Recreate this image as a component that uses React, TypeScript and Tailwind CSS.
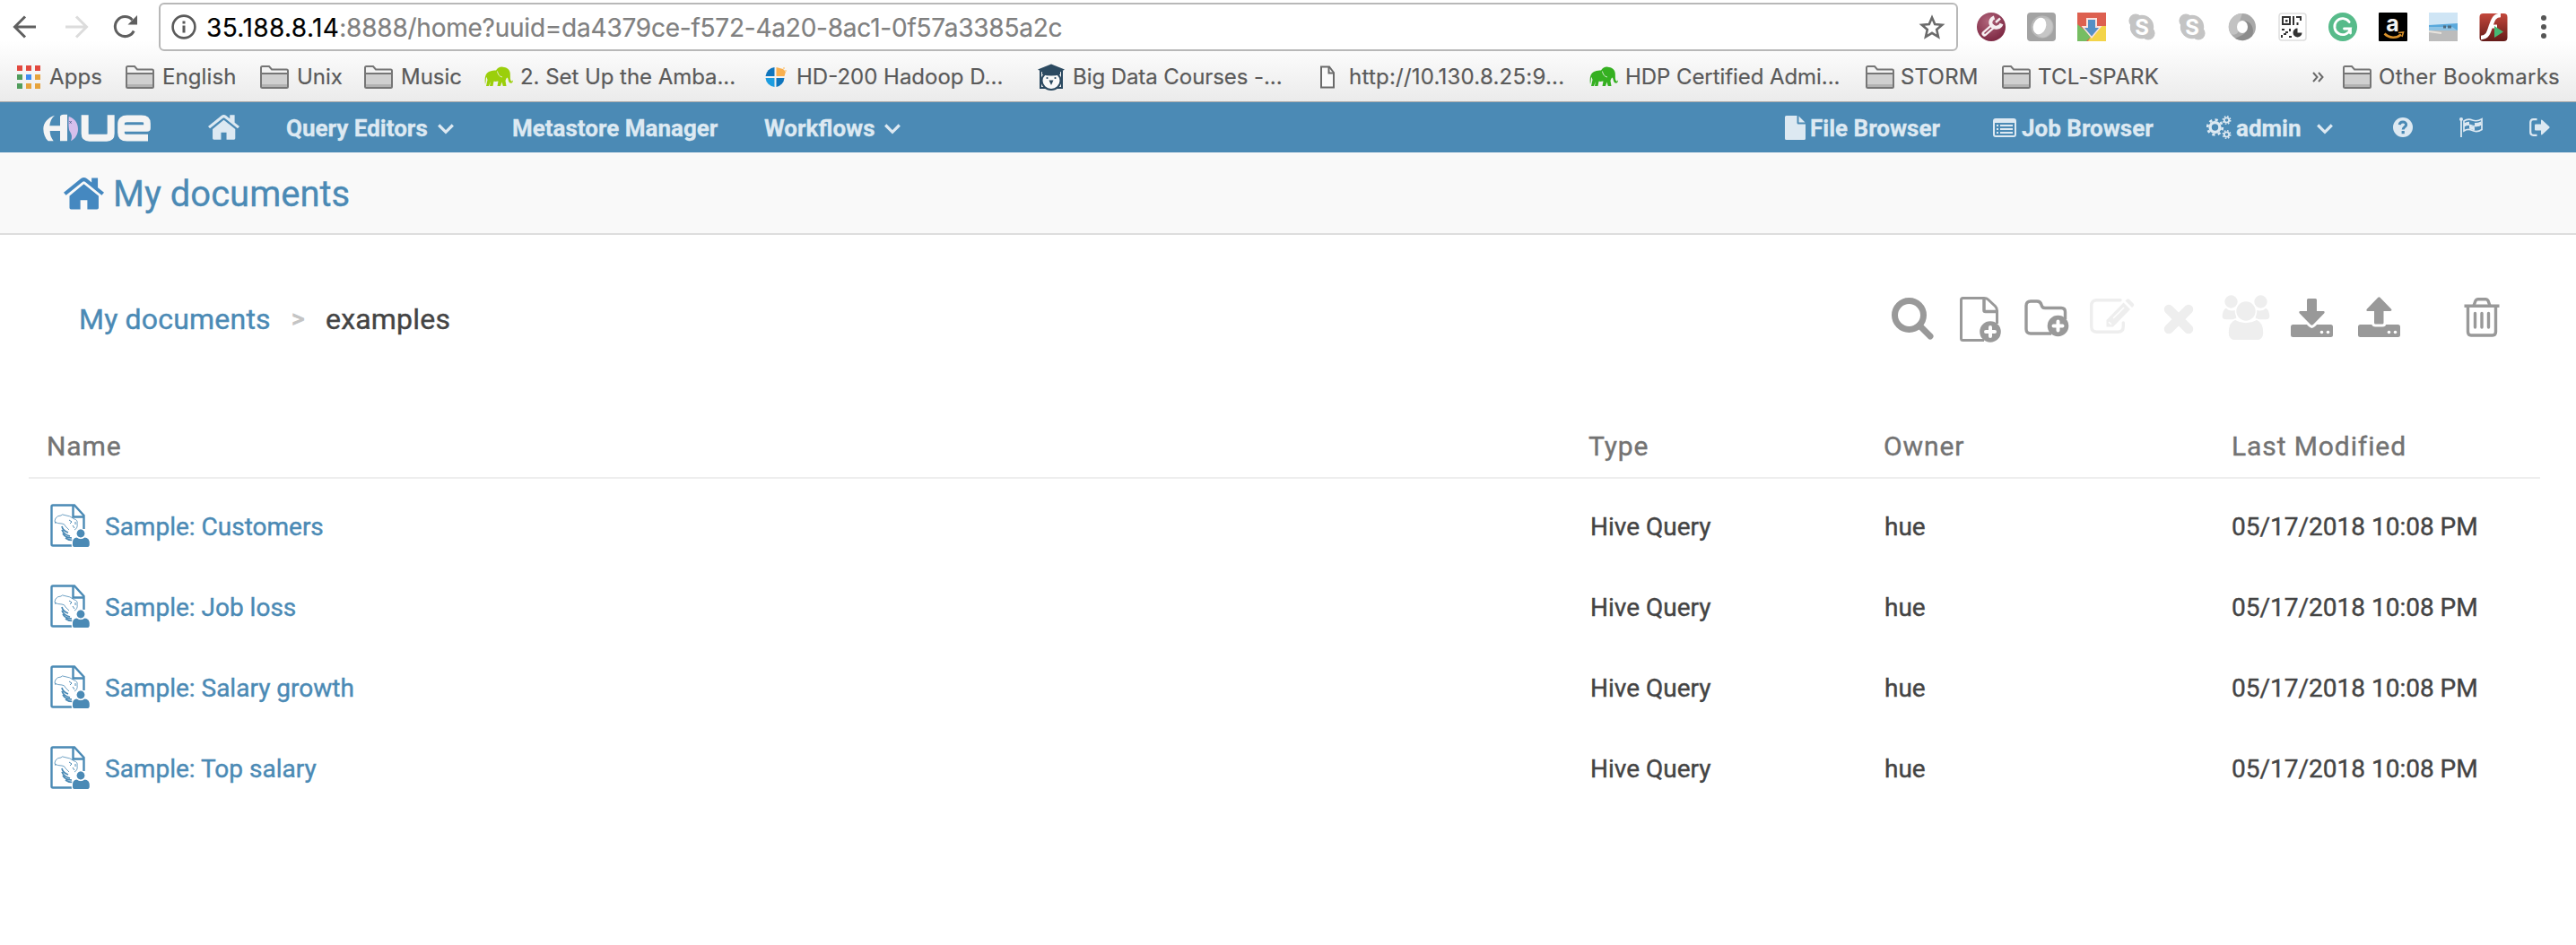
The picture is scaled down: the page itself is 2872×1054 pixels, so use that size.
import type { ReactNode } from "react";

/* ---------- Browser toolbar ---------- */

function BackArrow() {
  return (
    <svg className="h-[26px] w-[28px]" viewBox="0 0 28 26" fill="none" stroke="currentColor" strokeWidth="3">
      <path d="M26 13H3M14 1.5L2.5 13L14 24.5" />
    </svg>
  );
}

function Reload() {
  return (
    <svg className="h-[28px] w-[28px]" viewBox="0 0 28 28" fill="none">
      <path d="M23.2 18.5A11 11 0 1 1 21.5 6.2" stroke="#5f5f5f" strokeWidth="3" />
      <path d="M27 1V11.5H16.5Z" fill="#5f5f5f" />
    </svg>
  );
}

function Info() {
  return (
    <svg className="h-[28px] w-[28px]" viewBox="0 0 28 28">
      <circle cx="14" cy="14" r="12.4" fill="none" stroke="#5a5a5a" strokeWidth="2.6" />
      <rect x="12.5" y="12.5" width="3" height="8" fill="#5a5a5a" />
      <rect x="12.5" y="7.5" width="3" height="3" fill="#5a5a5a" />
    </svg>
  );
}

function Star() {
  return (
    <svg className="h-[29px] w-[30px]" viewBox="0 0 30 29">
      <path d="M15 3.5L18.2 11L26.3 11.7L20.2 17L22 25L15 20.8L8 25L9.8 17L3.7 11.7L11.8 11Z" fill="none" stroke="#6a6a6a" strokeWidth="2.6" />
    </svg>
  );
}

function Ext({ children }: { children: ReactNode }) {
  return (
    <svg className="h-8 w-8 shrink-0 overflow-visible" viewBox="0 0 32 32">
      {children}
    </svg>
  );
}

function Skype() {
  return (
    <Ext>
      <circle cx="9" cy="9" r="7.6" fill="#c4c4c4" />
      <circle cx="23" cy="23" r="7.6" fill="#c4c4c4" />
      <circle cx="16" cy="16" r="13.2" fill="#c4c4c4" />
      <text x="16" y="24.5" textAnchor="middle" fontFamily="Inter" fontWeight="700" fontSize="24" fill="#fff">S</text>
    </Ext>
  );
}

function Extensions() {
  return (
    <div className="flex items-center gap-6">
      <Ext>
        <defs>
          <radialGradient id="ruby" cx="0.4" cy="0.3" r="0.75">
            <stop offset="0" stopColor="#b0647a" />
            <stop offset="1" stopColor="#7a2540" />
          </radialGradient>
        </defs>
        <circle cx="16" cy="16" r="16" fill="url(#ruby)" />
        <path d="M8.500 23.500L17 16" stroke="#f6eef1" strokeWidth="6" strokeLinecap="round" />
        <path d="M8.500 23.500L17 16" stroke="#8d3450" strokeWidth="1.500" />
        <path d="M19.500 5.500C15 7 14 12 17 15C20 18 26 17 27.500 12.500" fill="none" stroke="#f6eef1" strokeWidth="4" />
        <path d="M21 11L26 6.500" stroke="#f6eef1" strokeWidth="2.500" />
      </Ext>
      <Ext>
        <rect width="32" height="32" rx="4" fill="#a3a3a3" />
        <circle cx="17" cy="16" r="12.500" fill="#b9b9b9" />
        <ellipse cx="19" cy="17" rx="9" ry="11" fill="#c6c6c6" transform="rotate(25 19 17)" />
        <ellipse cx="14" cy="15" rx="7" ry="9.500" fill="#fff" transform="rotate(20 14 15)" />
      </Ext>
      <Ext>
        <rect width="32" height="32" fill="#dd6050" />
        <path d="M0 13V32H10L16 26Z" fill="#76bd62" />
        <path d="M32 15V32H12L22 15Z" fill="#f3d44a" />
        <path d="M10 6H22V15H27.500L16 29L4.500 15H10Z" fill="#fbe3df" />
        <path d="M12 8H20V17H24L16 26.500L8 17H12Z" fill="#5590c5" />
      </Ext>
      <Skype />
      <Skype />
      <Ext>
        <circle cx="16" cy="16" r="15" fill="#a9a9a9" />
        <path d="M16 1A15 15 0 0 0 3 24C8 26 14 24 12 12Z" fill="#c2c2c2" />
        <path d="M27 26A15 15 0 0 1 8 29L16 25C22 22 22 14 17 9C26 9 30 18 27 26Z" fill="#8c8c8c" />
        <ellipse cx="16" cy="16" rx="6" ry="7" fill="#fff" />
      </Ext>
      <Ext>
        <rect x="1" y="1" width="30" height="30" rx="3" fill="#fff" stroke="#dedede" strokeWidth="1.500" />
        <rect x="5" y="5" width="8" height="8" fill="none" stroke="#333" strokeWidth="2" />
        <rect x="8" y="8" width="2.500" height="2.500" fill="#333" />
        <path d="M17 4V14M20 5H26M25 4V9M21.500 11V14M4 19H7M8 22H11M4 25V28M12 27H15M13 18V21M6 24H9" stroke="#333" strokeWidth="2" />
        <path d="M21.500 17.500A5 5 0 1 0 26.500 22.500H21.500Z" fill="#333" />
      </Ext>
      <Ext>
        <circle cx="16" cy="16" r="16" fill="#57bb8a" />
        <path d="M23.200 10.500A9 9 0 1 0 24.500 18H17.500M24.500 18V23" fill="none" stroke="#fff" strokeWidth="2.800" strokeLinecap="round" />
      </Ext>
      <Ext>
        <rect width="32" height="32" rx="1" fill="#000" />
        <text x="15.500" y="20.500" textAnchor="middle" fontFamily="Inter" fontWeight="700" fontSize="25" fill="#f2f2f2">a</text>
        <path d="M6.500 23.500C12 29 20 29 25 24.500" fill="none" stroke="#d8902a" strokeWidth="2.600" />
        <path d="M22 22.500L27.500 22L26 27" fill="none" stroke="#d8902a" strokeWidth="1.600" />
      </Ext>
      <Ext>
        <rect width="32" height="32" fill="#cfe5f5" />
        <path d="M0 14L32 12V22H0Z" fill="#5aa9dc" />
        <path d="M0 16H26L32 20H0Z" fill="#8fc3e4" />
        <path d="M16 16H19M21 16H25" stroke="#4c6b80" strokeWidth="3" />
        <path d="M0 20L32 20V32H0Z" fill="#bcbcbc" />
        <path d="M0 21L14 23" stroke="#e8e4de" strokeWidth="2" />
      </Ext>
      <Ext>
        <defs>
          <linearGradient id="flash" x1="0" y1="0" x2="0" y2="1">
            <stop offset="0" stopColor="#c4483c" />
            <stop offset="1" stopColor="#641a18" />
          </linearGradient>
        </defs>
        <rect x="0.500" y="1" width="31" height="31" rx="4" fill="url(#flash)" />
        <path d="M24 3C17 3 15.500 8 13 15C10.500 23 9 28 2 28" fill="none" stroke="#fff" strokeWidth="4.500" />
        <path d="M12 15.500H20" stroke="#fff" strokeWidth="4" />
        <path d="M17 15L27 21.500L17 28Z" fill="#45b874" />
      </Ext>
    </div>
  );
}

function Folder() {
  return (
    <svg className="h-[26px] w-8" viewBox="0 0 32 26">
      <path d="M1 24V2.500Q1 1 2.500 1H10L13 4.500H29.500Q31 4.500 31 6V23.500Q31 25 29.500 25H2.500Q1 25 1 24Z" fill="#f3f3f3" stroke="#767676" strokeWidth="2" />
      <path d="M2 10H30V24H2Z" fill="#d0d0d0" />
      <path d="M2 22.500H30" stroke="#b2b2b2" strokeWidth="3" />
      <path d="M1 9H31" stroke="#767676" strokeWidth="2" />
    </svg>
  );
}

function AppsGrid() {
  const colors = ["#e2493f", "#e2493f", "#e2493f", "#519d5c", "#3f8cf0", "#e6a33c", "#519d5c", "#e6a33c", "#e6a33c"];
  return (
    <div className="grid w-[26px] grid-cols-3 gap-[4px]">
      {colors.map((c, i) => (
        <svg key={i} className="h-[6px] w-[6px]" viewBox="0 0 6 6">
          <rect width="6" height="6" fill={c} />
        </svg>
      ))}
    </div>
  );
}

function Elephant({ color }: { color: string }) {
  return (
    <svg className="h-[23px] w-8" viewBox="0 0 32 23">
      <path
        d="M1 20C0 13 1 8 5 6C8 4.500 11 4.500 13 4.500C15 1 19 -0.500 22 1C26 1.500 28.500 4 28.800 8C29 12 28.500 15 30 16.500C30.800 17.300 31 16 31.800 15.600C32 18 30.500 19 29 18.500C26.500 18 27 13.500 25.500 12.500C24.500 13 24 14.500 23.500 16L24.500 22H20.800L19.500 17.500L18 22H14.500L15.500 16.500C13.500 17 12 17 10.500 16.800L9.500 22H6L6.800 17L5 22H2L3.500 15C3 13 2.500 12 2.200 12C1.600 14 2 17 1 20Z"
        fill={color}
      />
      <path d="M14.500 5.500C15 9 17 11.500 20 12" fill="none" stroke="#f4f4f4" strokeWidth="0.800" />
    </svg>
  );
}

function Quarters() {
  return (
    <svg className="h-[24px] w-[24px]" viewBox="0 0 24 24">
      <path d="M10.500 1V11H0.500A11 11 0 0 1 10.500 1Z" fill="#0f75bd" />
      <path d="M12.500 1V11H21.500L23 6L20 3Z" fill="#f9b04f" />
      <path d="M20 1H22V3H20ZM22 4H24V6H22Z" fill="#fbd7a4" />
      <path d="M0.500 13H10.500V23A11 11 0 0 1 0.500 13Z" fill="#1c9de0" />
      <path d="M12.500 13H21.500A11 11 0 0 1 12.500 23Z" fill="#0f75bd" />
    </svg>
  );
}

function Owl() {
  return (
    <svg className="h-[30px] w-[30px]" viewBox="0 0 30 30">
      <path d="M3 8V27H9M27 8V27H21" fill="none" stroke="#2c4a61" strokeWidth="2" />
      <ellipse cx="15" cy="19" rx="10.500" ry="10" fill="#fafafa" stroke="#2c4a61" strokeWidth="2" />
      <path d="M15 0.500L30 6.500L25 9.500V12Q15 15 5 12V9.500L0 6.500Z" fill="#2c4a61" />
      <path d="M12.500 18.500H17.500L15 24Z" fill="#2c4a61" />
      <circle cx="10.500" cy="16" r="1.100" fill="#2c4a61" />
      <circle cx="19.500" cy="16" r="1.100" fill="#2c4a61" />
    </svg>
  );
}

function PageIcon() {
  return (
    <svg className="h-[26px] w-4" viewBox="0 0 16 26" fill="none" stroke="#6a6a6a" strokeWidth="2">
      <path d="M1 1.500H10L15 8V24.500H1Z" fill="#fafafa" />
      <path d="M9.500 2V8.500H15" />
    </svg>
  );
}

const bookmarks: { icon: ReactNode; label: string; cell: string; lead: string; track: string }[] = [
  { icon: <AppsGrid />, label: "Apps", cell: "w-[121px]", lead: "w-[36px]", track: "tracking-[0.1px]" },
  { icon: <Folder />, label: "English", cell: "w-[150px]", lead: "w-[41px]", track: "tracking-[0.1px]" },
  { icon: <Folder />, label: "Unix", cell: "w-[116px]", lead: "w-[41px]", track: "tracking-[0px]" },
  { icon: <Folder />, label: "Music", cell: "w-[134px]", lead: "w-[41px]", track: "tracking-[0px]" },
  { icon: <Elephant color="#9bcf0b" />, label: "2. Set Up the Amba...", cell: "w-[313px]", lead: "w-[40px]", track: "tracking-[-0.05px]" },
  { icon: <Quarters />, label: "HD-200 Hadoop D...", cell: "w-[304px]", lead: "w-[35px]", track: "tracking-[0px]" },
  { icon: <Owl />, label: "Big Data Courses -...", cell: "w-[315px]", lead: "w-[39px]", track: "tracking-[-0.07px]" },
  { icon: <PageIcon />, label: "http://10.130.8.25:9...", cell: "w-[300px]", lead: "w-[32px]", track: "tracking-[0.22px]" },
  { icon: <Elephant color="#35b021" />, label: "HDP Certified Admi...", cell: "w-[308px]", lead: "w-[40px]", track: "tracking-[-0.07px]" },
  { icon: <Folder />, label: "STORM", cell: "w-[152px]", lead: "w-[39px]", track: "tracking-[0.2px]" },
  { icon: <Folder />, label: "TCL-SPARK", cell: "w-[180px]", lead: "w-[40px]", track: "tracking-[0.25px]" },
];

function Browser() {
  return (
    <header className="h-[114px] border-b border-[#a8a8a8] bg-linear-to-b from-white from-40% to-[#ebebeb] font-[Inter,sans-serif]">
      <div className="flex h-[60px] items-start pt-[3px]">
        <div className="flex h-[54px] w-[177px] shrink-0 items-center pl-[14px]">
          <span className="w-[57px] text-[#606060]"><BackArrow /></span>
          <span className="w-[55px] -scale-x-100 text-[#dcdcdc]"><span className="flex justify-end"><BackArrow /></span></span>
          <Reload />
        </div>
        <div className="flex h-[54px] w-[2006px] shrink-0 items-center rounded-[6px] border-2 border-[#b8b8b8] bg-white pr-[12px] pl-[12px]">
          <Info />
          <p className="ml-[11px] flex-1 pt-[1px] text-[28px] leading-[40px] whitespace-nowrap text-[#808080] [-webkit-text-stroke:0.2px]">
            <span className="tracking-[0.4px] text-black">35.188.8.14</span>
            <span className="tracking-[-0.23px]">:8888/home?uuid=da4379ce-f572-4a20-8ac1-0f57a3385a2c</span>
          </p>
          <Star />
        </div>
        <div className="flex h-[54px] items-center pl-[21px]">
          <Extensions />
          <svg className="ml-[36px] h-[28px] w-2" viewBox="0 0 8 28" fill="#565656">
            <circle cx="4" cy="4" r="3" />
            <circle cx="4" cy="14" r="3" />
            <circle cx="4" cy="24" r="3" />
          </svg>
        </div>
      </div>
      <nav className="flex h-[51px] items-center pl-[19px] text-[24px] leading-[30px] whitespace-nowrap text-[#5a5a5a] [-webkit-text-stroke:0.2px]">
        {bookmarks.map((b) => (
          <div key={b.label} className={`flex shrink-0 items-center ${b.cell}`}>
            <span className={`shrink-0 ${b.lead}`}>{b.icon}</span>
            <span className={b.track}>{b.label}</span>
          </div>
        ))}
        <svg className="ml-[166px] h-[12px] w-[13px] shrink-0" viewBox="0 0 13 12" fill="none" stroke="#6a6a6a" strokeWidth="2">
          <path d="M1 1L5.500 6L1 11M7 1L11.500 6L7 11" />
        </svg>
        <div className="ml-[21px] flex shrink-0 items-center">
          <span className="w-[40px]"><Folder /></span>
          <span className="tracking-[0.3px]">Other Bookmarks</span>
        </div>
      </nav>
    </header>
  );
}

/* ---------- Application bar ---------- */

function HueLogo() {
  return (
    <svg className="h-[31px] w-[121px]" viewBox="23 26 363 93" fill="none">
      <path d="M62 31C40 38 24 55 24 76C24 92 30 107 40 117H58C50 106 46 96 46 83H80V117H104V28H92Q80 28 80 36V66H45C46 52 52 39 62 31Z" fill="#f4f4f4" />
      <path d="M109 35C128 40 140 57 140 77C140 95 130 110 116 117C121 105 120 95 112 84C108 76 108 55 109 35Z" fill="#d7bfec" />
      <path d="M111 50L118 58M118 50L112 58" stroke="#4b5f8c" strokeWidth="2.500" />
      <path d="M163 30V92Q163 106 178 106H236Q250 106 250 92V30" stroke="#f4f4f4" strokeWidth="24" />
      <path d="M374 106H304Q284 106 284 88V60Q284 42 304 42H352Q371 42 371 58V74H288" stroke="#f4f4f4" strokeWidth="23" strokeLinejoin="round" />
    </svg>
  );
}

function House({ className }: { className: string }) {
  return (
    <svg className={className} viewBox="577 31 104 84" fill="currentColor" preserveAspectRatio="none">
      <path d="M577 70L621 34Q629 28 637 34L649 44V32H665V57L681 70L675 77L632 42Q629 40 626 42L583 77Z" />
      <path d="M629 48L667 79V110Q667 114 663 114H638V90H620V114H596Q592 114 592 110V79Z" />
    </svg>
  );
}

function Chevron() {
  return (
    <svg className="h-[12px] w-[18px]" viewBox="0 0 18 12" fill="none" stroke="currentColor" strokeWidth="3.200">
      <path d="M1.200 1.500L9 9.300L16.800 1.500" />
    </svg>
  );
}

function Gears() {
  const gear = (cx: number, cy: number, r: number, s: number, d: string) => (
    <g>
      <circle cx={cx} cy={cy} r={r} strokeWidth={s} />
      <circle cx={cx} cy={cy} r={r + s * 0.85} strokeWidth={s * 0.8} strokeDasharray={d} />
    </g>
  );
  return (
    <svg className="h-[26px] w-[28px]" viewBox="0 0 28 26" fill="none" stroke="currentColor">
      {gear(9.5, 13, 5.4, 3.4, "3.200 3.270")}
      {gear(22.5, 5, 2.7, 1.8, "1.700 1.630")}
      {gear(22.5, 21, 2.7, 1.8, "1.700 1.630")}
    </svg>
  );
}

function AppBar() {
  return (
    <nav className="flex h-[56px] items-center bg-[#4b8ab5] pl-[48px] font-[Roboto,sans-serif] text-[26px] leading-[30px] font-bold whitespace-nowrap text-[#dde9f2] [-webkit-text-stroke:0.3px]">
      <div className="w-[184px]"><HueLogo /></div>
      <div className="w-[87px]"><House className="h-[28px] w-[35px]" /></div>
      <div className="flex w-[252px] items-center gap-[11px] pt-[1px]">Query Editors <span className="pt-[2px]"><Chevron /></span></div>
      <div className="w-[281px] pt-[1px]">Metastore Manager</div>
      <div className="flex w-[200px] items-center gap-[10px] pt-[1px]">Workflows <span className="pt-[2px]"><Chevron /></span></div>
      <div className="ml-auto flex w-[232px] items-center">
        <svg className="h-[27px] w-[23px]" viewBox="0 0 23 27" fill="currentColor">
          <path d="M0 1.500Q0 0 1.500 0H13.500V8Q13.500 9.500 15 9.500H23V25.500Q23 27 21.500 27H1.500Q0 27 0 25.500ZM15.500 0.500L22.500 7.500H15.500Z" />
        </svg>
        <span className="ml-[5px] pt-[1px]">File Browser</span>
      </div>
      <div className="flex w-[238px] items-center">
        <svg className="h-[21px] w-[26px]" viewBox="0 0 26 21" fill="none" stroke="currentColor">
          <rect x="1" y="1" width="24" height="19" rx="2" strokeWidth="2" />
          <path d="M1 3H25" strokeWidth="4" />
          <path d="M4 8H6M8 8H22M4 12H6M8 12H22M4 16H6M8 16H22" strokeWidth="2" />
        </svg>
        <span className="ml-[6px] pt-[1px]">Job Browser</span>
      </div>
      <div className="flex w-[208px] items-center">
        <Gears />
        <span className="ml-[5px] pt-[1px]">admin</span>
        <span className="ml-[17px] pt-[3px]"><Chevron /></span>
      </div>
      <div className="w-[74px]">
        <svg className="h-[22px] w-[22px]" viewBox="0 0 22 22">
          <circle cx="11" cy="11" r="11" fill="currentColor" />
          <path d="M7.300 8.200C7.600 3.800 14.800 4 14.600 8.300C14.400 10.700 11.200 10.800 11.200 13.600" fill="none" stroke="#4b8ab5" strokeWidth="3" />
          <rect x="9.600" y="15" width="3.200" height="3.200" fill="#4b8ab5" />
        </svg>
      </div>
      <div className="w-[78px]">
        <svg className="h-[22px] w-[26px]" viewBox="0 0 26 22" fill="none" stroke="currentColor">
          <path d="M2 1V22" strokeWidth="1.800" />
          <circle cx="2" cy="2" r="2" fill="currentColor" stroke="none" />
          <path d="M5 4Q9.500 0.800 14.500 3Q19.500 5 25 1.800V13.500Q19.500 17 14.500 14.500Q9.500 12 5 15Z" strokeWidth="1.700" />
          <path d="M5 6.500Q8 4.700 11 4.800V8.800Q8 8.700 5 10.500ZM11 8.800Q14 9 17 10.500V14.500Q14 13.500 11 12.500ZM17 6Q20 6.500 24 4.500V8.800Q20 10.800 17 10.200Z" fill="currentColor" stroke="none" />
          <path d="M5 9.700Q9 7 14.500 9Q20 11 25 7.500" strokeWidth="1.100" />
        </svg>
      </div>
      <div className="w-[52px]">
        <svg className="h-[20px] w-[23px]" viewBox="0 0 23 20">
          <path d="M8.500 1.200H4.500Q1.200 1.200 1.200 4.500V15.500Q1.200 18.800 4.500 18.800H8.500" fill="none" stroke="currentColor" strokeWidth="2.200" />
          <path d="M6 7.500Q6 6.500 7 6.500H13V2.500Q13.200 1 14.500 2L22.300 9.200Q23 10 22.300 10.800L14.500 18Q13.200 19 13 17.500V13.500H7Q6 13.500 6 12.500Z" fill="currentColor" />
        </svg>
      </div>
    </nav>
  );
}

/* ---------- Document actions ---------- */

function Actions() {
  return (
    <div className="flex items-start text-[#999999]">
      <div className="w-[76px] pt-[3px]">
        <svg className="h-[47px] w-[47px]" viewBox="0 0 47 47" fill="none" stroke="currentColor" strokeWidth="7">
          <circle cx="19.500" cy="19.500" r="16" />
          <path d="M31 31L43 43" strokeLinecap="round" />
        </svg>
      </div>
      <div className="w-[72px] pt-[2px]">
        <svg className="h-[51px] w-[46px]" viewBox="0 0 46 51">
          <path d="M27 48.500H3.500Q1.500 48.500 1.500 46.500V3.500Q1.500 1.500 3.500 1.500H27Q30 1.500 31.500 3L39.500 10.500Q41.500 12.500 41.500 15.500V30" fill="none" stroke="currentColor" strokeWidth="3" />
          <path d="M27 2V15Q27 16.500 28.500 16.500H41" fill="none" stroke="currentColor" strokeWidth="3.500" />
          <circle cx="34" cy="39" r="11.800" fill="currentColor" />
          <path d="M34 34V44M29 39H39" stroke="#fff" strokeWidth="4" strokeLinecap="round" />
        </svg>
      </div>
      <div className="w-[73px] pt-[5px]">
        <svg className="h-[43px] w-[50px]" viewBox="0 0 50 43">
          <path d="M30 38H7Q2 38 2 33V7Q2 2 7 2H14Q18 2 19 6Q19.500 9.500 23 9.500H41Q45.500 9.500 45.500 14V22" fill="none" stroke="currentColor" strokeWidth="3.400" />
          <circle cx="37.500" cy="29.500" r="11.800" fill="currentColor" />
          <path d="M37.500 24.500V34.500M32.500 29.500H42.500" stroke="#fff" strokeWidth="4" strokeLinecap="round" />
        </svg>
      </div>
      <div className="w-[82px] pt-[4px] text-[#eeeeee]">
        <svg className="h-[40px] w-[50px]" viewBox="0 0 50 40">
          <path d="M34 1.700H8Q1.700 1.700 1.700 8V31Q1.700 37.300 8 37.300H31Q37.300 37.300 37.300 31V27" fill="none" stroke="currentColor" strokeWidth="3.400" strokeLinecap="round" />
          <path d="M37.500 4.500L45 12L26 31.500H18.500V24Z" fill="currentColor" />
          <path d="M39.500 2.500L41 1Q42.500 -0.500 44 1L48.500 5.500Q50 7 48.500 8.500L47 10Z" fill="currentColor" />
          <path d="M26 22L38 10M21 26L24 29" stroke="#fff" strokeWidth="1.500" />
        </svg>
      </div>
      <div className="w-[65px] pt-[10px] text-[#eeeeee]">
        <svg className="h-[34px] w-[34px]" viewBox="0 0 34 34" stroke="currentColor" strokeWidth="10.500" strokeLinecap="round">
          <path d="M6 6L28 28M28 6L6 28" />
        </svg>
      </div>
      <div className="w-[77px] text-[#eeeeee]">
        <svg className="h-[50px] w-[54px]" viewBox="0 0 54 50" fill="currentColor" stroke="#fff" strokeWidth="1.600">
          <path d="M5 14Q10 19 17 15V28H5Q-1 28 0 22Q1 15 5 14ZM49 14Q44 19 37 15V28H49Q55 28 54 22Q53 15 49 14Z" />
          <circle cx="10.500" cy="7.500" r="8" />
          <circle cx="43.500" cy="7.500" r="8" />
          <path d="M15 27Q27 34 39 27Q47 30 47 42Q47 51 39 51H15Q7 51 7 42Q7 30 15 27Z" />
          <circle cx="27" cy="18" r="11.500" />
        </svg>
      </div>
      <div className="w-[75px] pt-[4px]">
        <svg className="h-[43px] w-[47px]" viewBox="0 0 47 43">
          <path d="M2.500 29H44.500Q47 29 47 31.500V40.500Q47 43 44.500 43H2.500Q0 43 0 40.500V31.500Q0 29 2.500 29Z" fill="currentColor" />
          <path d="M18 1.500Q18 0 19.500 0H27.500Q29 0 29 1.500V14H36.500Q38.500 14.500 37.200 16.500L25 29Q23.500 30.500 22 29L9.800 16.500Q8.500 14.500 10.500 14H18Z" fill="currentColor" stroke="#fff" strokeWidth="6" paintOrder="stroke" />
          <circle cx="34.500" cy="37.500" r="1.800" fill="#fff" />
          <circle cx="41.500" cy="37.500" r="1.800" fill="#fff" />
        </svg>
      </div>
      <div className="w-[118px] pt-[2px]">
        <svg className="h-[45px] w-[47px]" viewBox="0 0 47 45">
          <path d="M2.500 31H44.500Q47 31 47 33.500V42.500Q47 45 44.500 45H2.500Q0 45 0 42.500V33.500Q0 31 2.500 31Z" fill="currentColor" />
          <path d="M18 29Q18 30.500 19.500 30.500H27Q28.500 30.500 28.500 29V16H36Q38.500 15.500 36.800 13.500L24.500 0.800Q23.500 -0.300 22.300 0.800L10 13.500Q8.500 15.500 10.500 16H18Z" fill="currentColor" stroke="#fff" strokeWidth="6" paintOrder="stroke" />
          <circle cx="34.500" cy="39.500" r="1.800" fill="#fff" />
          <circle cx="41.500" cy="39.500" r="1.800" fill="#fff" />
        </svg>
      </div>
      <div className="pt-[3px]">
        <svg className="h-[44px] w-[40px]" viewBox="0 0 40 44" fill="none" stroke="currentColor" strokeWidth="3.400">
          <path d="M0.500 9.200H39.500" />
          <path d="M11 9L13 3.500Q13.800 1.700 15.500 1.700H24.500Q26.200 1.700 27 3.500L29 9" />
          <path d="M4.500 10V38Q4.500 42 8 42H32Q35.500 42 35.500 38V10" />
          <path d="M12.500 17.500V33M20 17.500V33M27.500 17.500V33" strokeLinecap="round" />
        </svg>
      </div>
    </div>
  );
}

/* ---------- Document table ---------- */

function HiveDocument() {
  return (
    <svg className="h-[48px] w-[44px]" viewBox="0 0 44 48" fill="none" stroke="#4b8ab5">
      <path d="M24 46.500H3Q1.500 46.500 1.500 45V3Q1.500 1.500 3 1.500H27L37.500 13V28" strokeWidth="2.400" />
      <path d="M25.500 2V14.500H38" strokeWidth="2.400" />
      <path d="M6 22Q4 19 6 16Q8 13 12 13Q13 11 16 12.500Q22 13 27 17Q31 18 30 22Q31 27 27 29" strokeWidth="0.800" />
      <path d="M5 20Q8 22 13 22Q16 22 17 25L21 29" strokeWidth="0.800" />
      <path d="M21 18L24 20L22 22M25 24L27 27M28 20V23" strokeWidth="1" />
      <path d="M13 25Q14 30 20 32M13 29Q15 34 22 36M14 33Q17 38 24 38M17 38Q20 40.500 25 40.500" strokeWidth="1.700" />
      <circle cx="34" cy="33" r="4.400" fill="#4b8ab5" stroke="#fff" strokeWidth="2.500" paintOrder="stroke" />
      <path d="M25 46V43Q25 38 29.500 37.500Q34 41 38.500 37.500Q43.500 38 43.500 43V46Q43.500 48 41.500 48H27Q25 48 25 46Z" fill="#4b8ab5" stroke="#fff" strokeWidth="2.500" paintOrder="stroke" />
      <path d="M25.500 46V43Q25.500 38.500 29.500 38Q34 41 38.500 38Q43.500 38.500 43.500 43V46Q43.500 47.500 41.500 47.500H27Q25.500 47.500 25.500 46Z" fill="#4b8ab5" stroke="none" />
      <circle cx="34" cy="33" r="4.200" fill="#4b8ab5" stroke="none" />
    </svg>
  );
}

const documents = ["Sample: Customers", "Sample: Job loss", "Sample: Salary growth", "Sample: Top salary"];

export default function App() {
  return (
    <div className="h-[1054px] w-[2872px] overflow-hidden bg-white font-[Roboto,sans-serif]">
      <Browser />
      <AppBar />
      <div className="flex h-[92px] items-center border-b-2 border-[#dddddd] bg-[#f9f9f9] pl-[71px] text-[#4b8ab5]">
        <House className="mt-[2px] h-[36px] w-[45px] text-[#4588c0]" />
        <h1 className="ml-[10px] pt-[3px] text-[40px] leading-[48px] [-webkit-text-stroke:0.3px]">My documents</h1>
      </div>
      <div className="flex h-[189px] items-start justify-between pt-[67px] pr-[85px] pl-[88px]">
        <p className="flex items-center pt-[9px] text-[32px] leading-[36px] tracking-[0.2px] [-webkit-text-stroke:0.4px]">
          <a className="w-[237px] text-[#4b8ab5]">My documents</a>
          <span className="w-[38px] text-[28px] text-[#c4c4c4] [-webkit-text-stroke:1px]">&gt;</span>
          <span className="text-[#444444]">examples</span>
        </p>
        <Actions />
      </div>
      <main className="pr-[40px] pl-8 text-[28px] leading-[40px] [-webkit-text-stroke:0.4px]">
        <div className="grid h-[83px] grid-cols-[1739px_329px_388px_1fr] items-center border-b-2 border-[#eeeeee] pt-[13px] text-[30px] tracking-[0.9px] text-[#737373]">
          <span className="pl-5">Name</span>
          <span>Type</span>
          <span>Owner</span>
          <span>Last Modified</span>
        </div>
        <div className="pt-[7px]">
          {documents.map((name) => (
            <div key={name} className="grid h-[90px] grid-cols-[1739px_329px_388px_1fr] items-center text-[#444444]">
              <div className="flex items-center pl-6">
                <HiveDocument />
                <span className="ml-[17px] pt-[4px] text-[#4b8ab5]">{name}</span>
              </div>
              <span className="pt-[4px] pl-[2px]">Hive Query</span>
              <span className="pt-[4px] pl-[1px]">hue</span>
              <span className="pt-[4px]">05/17/2018 10:08 PM</span>
            </div>
          ))}
        </div>
      </main>
    </div>
  );
}
